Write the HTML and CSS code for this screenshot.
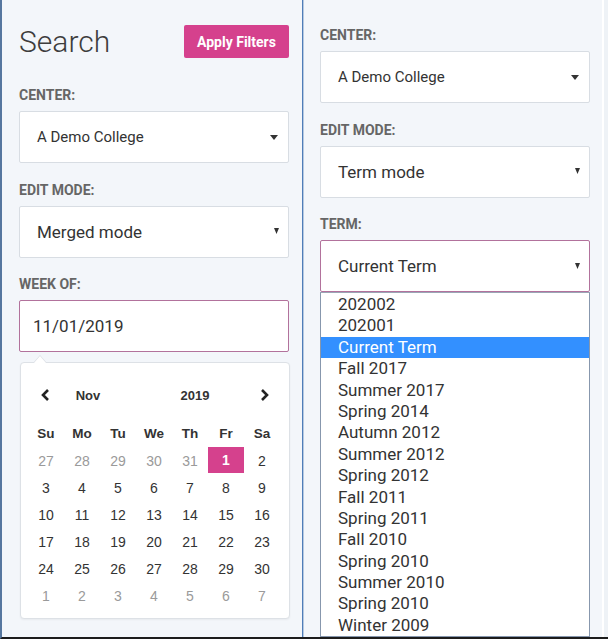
FILE: index.html
```html
<!DOCTYPE html>
<html>
<head>
<meta charset="utf-8">
<title>Search filters</title>
<link rel="stylesheet" href="styles.css">
</head>
<body>
<div class="frame">
  <section class="panel left">
    <div class="head">
      <h1 class="title">Search</h1>
      <button class="apply">Apply Filters</button>
    </div>
    <div class="field">
      <div class="label">CENTER:</div>
      <div class="select small">
        <span>A Demo College</span>
        <svg class="caret-wide" width="8" height="5" viewBox="0 0 8 5"><polygon points="0,0 8,0 4,5" fill="#333"/></svg>
      </div>
    </div>
    <div class="field">
      <div class="label">EDIT MODE:</div>
      <div class="select">
        <span>Merged mode</span>
        <svg class="caret-tall" width="5" height="7" viewBox="0 0 5 7"><polygon points="0,0 5,0 2.5,6" fill="#333"/></svg>
      </div>
    </div>
    <div class="field last">
      <div class="label">WEEK OF:</div>
      <div class="select focus date"><span>11/01/2019</span></div>
    </div>
    <div class="picker">
      <div class="nav">
        <span class="chev prev"><svg width="9" height="12" viewBox="0 0 9 12"><polyline points="7,1 2,6 7,11" fill="none" stroke="#222" stroke-width="2.6"/></svg></span>
        <span class="month">Nov</span>
        <span class="year">2019</span>
        <span class="chev next"><svg width="9" height="12" viewBox="0 0 9 12"><polyline points="2,1 7,6 2,11" fill="none" stroke="#222" stroke-width="2.6"/></svg></span>
      </div>
      <div class="grid">
        <span class="dow">Su</span><span class="dow">Mo</span><span class="dow">Tu</span><span class="dow">We</span><span class="dow">Th</span><span class="dow">Fr</span><span class="dow">Sa</span>
        <span class="muted">27</span><span class="muted">28</span><span class="muted">29</span><span class="muted">30</span><span class="muted">31</span><span class="sel">1</span><span>2</span>
        <span>3</span><span>4</span><span>5</span><span>6</span><span>7</span><span>8</span><span>9</span>
        <span>10</span><span>11</span><span>12</span><span>13</span><span>14</span><span>15</span><span>16</span>
        <span>17</span><span>18</span><span>19</span><span>20</span><span>21</span><span>22</span><span>23</span>
        <span>24</span><span>25</span><span>26</span><span>27</span><span>28</span><span>29</span><span>30</span>
        <span class="muted">1</span><span class="muted">2</span><span class="muted">3</span><span class="muted">4</span><span class="muted">5</span><span class="muted">6</span><span class="muted">7</span>
      </div>
    </div>
  </section>
  <div class="divider"></div>
  <section class="panel right">
    <div class="field">
      <div class="label">CENTER:</div>
      <div class="select small">
        <span>A Demo College</span>
        <svg class="caret-wide" width="8" height="5" viewBox="0 0 8 5"><polygon points="0,0 8,0 4,5" fill="#333"/></svg>
      </div>
    </div>
    <div class="field">
      <div class="label">EDIT MODE:</div>
      <div class="select">
        <span>Term mode</span>
        <svg class="caret-tall" width="5" height="7" viewBox="0 0 5 7"><polygon points="0,0 5,0 2.5,6" fill="#333"/></svg>
      </div>
    </div>
    <div class="field last">
      <div class="label">TERM:</div>
      <div class="select focus">
        <span>Current Term</span>
        <svg class="caret-tall" width="5" height="7" viewBox="0 0 5 7"><polygon points="0,0 5,0 2.5,6" fill="#333"/></svg>
      </div>
    </div>
    <ul class="options">
      <li>202002</li>
      <li>202001</li>
      <li class="hl">Current Term</li>
      <li>Fall 2017</li>
      <li>Summer 2017</li>
      <li>Spring 2014</li>
      <li>Autumn 2012</li>
      <li>Summer 2012</li>
      <li>Spring 2012</li>
      <li>Fall 2011</li>
      <li>Spring 2011</li>
      <li>Fall 2010</li>
      <li>Spring 2010</li>
      <li>Summer 2010</li>
      <li>Spring 2010</li>
      <li>Winter 2009</li>
    </ul>
  </section>
  <div class="edge"></div>
</div>
</body>
</html>
```
FILE: styles.css
```css
html, body {
  margin: 0;
  padding: 0;
  overflow: hidden;
}
body {
  font-family: Roboto, "Liberation Sans", sans-serif;
  color: #333;
}
.frame {
  width: 608px;
  height: 639px;
  box-sizing: border-box;
  display: flex;
  background: #f3f6fa;
  border-left: 2px solid #56779f;
  border-bottom: 2px solid #1c1c1c;
  overflow: hidden;
}
.panel {
  display: flex;
  flex-direction: column;
  overflow: hidden;
  box-sizing: border-box;
}
.panel.left {
  width: 300px;
  padding: 25px 13px 0 17px;
}
.divider {
  width: 1px;
  background: #4f7db8;
  border-right: 1px solid #b6c9e0;
}
.panel.right {
  width: 298px;
  padding: 27px 12px 0 16px;
}
.edge {
  flex: 1;
  border-left: 2px solid #ffffff;
  background: #eef2f6;
}
.head {
  display: flex;
  align-items: center;
  justify-content: space-between;
  height: 33px;
  margin-bottom: 29px;
}
.title {
  margin: 0;
  font-size: 30px;
  font-weight: 300;
  color: #3d3d3d;
  line-height: 33px;
}
.apply {
  width: 105px;
  height: 33px;
  border: none;
  border-radius: 2px;
  background: #d5418d;
  color: #fff;
  font-family: Roboto, sans-serif;
  font-size: 14px;
  font-weight: 700;
  padding: 0;
}
.field {
  margin-bottom: 18.5px;
}
.field.last {
  margin-bottom: 0;
}
.label {
  font-size: 14px;
  font-weight: 700;
  color: #666;
  line-height: 16px;
  height: 16px;
  margin-bottom: 8px;
}
.select {
  width: 270px;
  height: 52px;
  box-sizing: border-box;
  background: #fff;
  border: 1px solid #d8dde3;
  border-radius: 2px;
  display: flex;
  align-items: center;
  justify-content: space-between;
  padding: 0 9px 0 17px;
  font-size: 17px;
  color: #333;
}
.select.small {
  font-size: 15px;
  padding-right: 9px;
}
.select.focus {
  border-color: #b2729c;
}
.select.date {
  padding-left: 13px;
}
.caret-wide {
  margin-right: 1px;
}
.caret-tall {
  margin-right: 0;
}
.picker {
  position: relative;
  width: 270px;
  margin-top: 10px;
  margin-left: 1px;
  box-sizing: border-box;
  background: #fff;
  border: 1px solid #dde1e6;
  border-radius: 4px;
  padding: 18px 7px 9px 7px;
  font-family: "Liberation Sans", Arial, sans-serif;
  box-shadow: 0 1px 2px rgba(0, 0, 0, 0.05);
}
.picker::before {
  content: "";
  position: absolute;
  top: -8px;
  left: 12px;
  border-left: 7px solid transparent;
  border-right: 7px solid transparent;
  border-bottom: 8px solid #dde1e6;
}
.picker::after {
  content: "";
  position: absolute;
  top: -7px;
  left: 13px;
  border-left: 6px solid transparent;
  border-right: 6px solid transparent;
  border-bottom: 7px solid #fff;
}
.nav {
  display: flex;
  align-items: center;
  height: 28px;
  margin-bottom: 11px;
  font-size: 13px;
  font-weight: 700;
  color: #333;
}
.chev {
  width: 34px;
  display: flex;
  justify-content: center;
}
.chev.next {
  width: 36px;
  margin-left: 26px;
}
.month {
  width: 52px;
  text-align: center;
}
.year {
  width: 50px;
  margin-left: 56px;
  text-align: center;
}
.grid {
  display: grid;
  grid-template-columns: repeat(7, 36px);
  grid-auto-rows: 27px;
  font-size: 14px;
  color: #333;
}
.grid span {
  display: flex;
  align-items: center;
  justify-content: center;
}
.grid .dow {
  font-weight: 700;
  font-size: 13.5px;
}
.grid .muted {
  color: #9a9a9a;
}
.grid .sel {
  background: #d5418d;
  color: #fff;
  font-weight: 700;
  height: 26px;
}
.options {
  list-style: none;
  margin: 0;
  padding: 1px 0 0 0;
  width: 270px;
  box-sizing: border-box;
  background: #fff;
  border: 1px solid #8797ad;
  border-top-color: #9aa6b6;
  font-size: 17px;
  color: #333;
  flex: 1 0 auto;
}
.options li {
  line-height: 21.4px;
  height: 21.4px;
  padding-left: 17px;
}
.options li.hl {
  background: #3390ff;
  color: #fff;
}
```
